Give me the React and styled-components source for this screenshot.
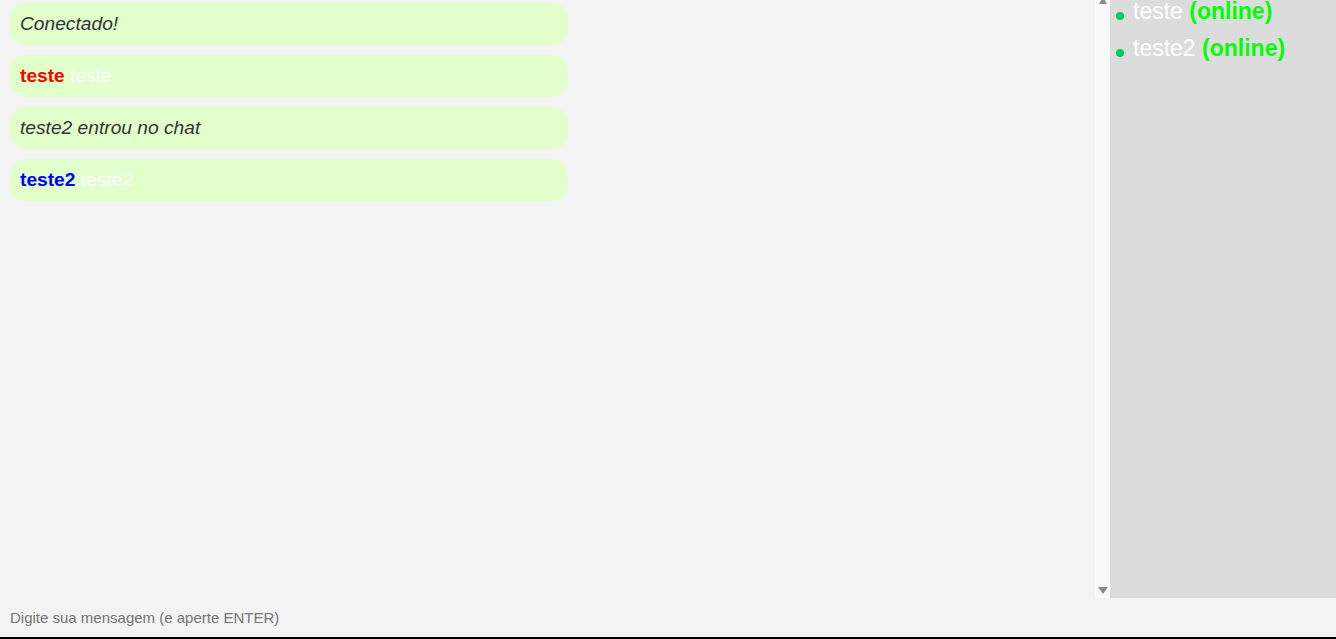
import { createGlobalStyle, styled } from "styled-components";

const GlobalStyle = createGlobalStyle`
  html, body {
    margin: 0;
    padding: 0;
    height: 100%;
    background: #f3f3f3;
    font-family: "Liberation Sans", Arial, sans-serif;
    overflow: hidden;
  }
`;

const messages = [
  { type: "system", text: "Conectado!" },
  { type: "chat", user: "teste", color: "#ff0000", text: "teste" },
  { type: "system", text: "teste2 entrou no chat" },
  { type: "chat", user: "teste2", color: "#0000ff", text: "teste2" },
];

const users = ["teste", "teste2"];

const App = () => {
  return (
    <Page>
      <GlobalStyle />
      <Main>
        <ChatArea>
          {messages.map((m, i) =>
            m.type === "system" ? (
              <Bubble key={i}>
                <SystemText>{m.text}</SystemText>
              </Bubble>
            ) : (
              <Bubble key={i}>
                <UserName $color={m.color}>{m.user}</UserName>{" "}
                <MsgText>{m.text}</MsgText>
              </Bubble>
            )
          )}
        </ChatArea>
        <ScrollTrack>
          <ArrowUp />
          <ArrowDown />
        </ScrollTrack>
        <UsersPanel>
          <UserList>
            {users.map((u) => (
              <UserItem key={u}>
                <UserLabel>{u}</UserLabel> <Online>(online)</Online>
              </UserItem>
            ))}
          </UserList>
        </UsersPanel>
      </Main>
      <MessageInput type="text" placeholder="Digite sua mensagem (e aperte ENTER)" />
    </Page>
  );
};

export default App;

const Page = styled.div`
  display: flex;
  flex-direction: column;
  height: 639px;
  width: 1336px;
`;

const Main = styled.div`
  display: flex;
  height: 598px;
`;

const ChatArea = styled.div`
  flex: 1;
  display: flex;
  flex-direction: column;
  align-items: flex-start;
  gap: 10px;
  padding: 3px 10px 0 10px;
`;

const Bubble = styled.div`
  box-sizing: border-box;
  width: 558px;
  padding: 10px;
  background: #e1ffcb;
  border-radius: 15px;
  font-size: 19.2px;
  line-height: 22px;
`;

const SystemText = styled.span`
  font-style: italic;
  color: #333333;
`;

const UserName = styled.span`
  font-weight: bold;
  color: ${(p) => p.$color};
`;

const MsgText = styled.span`
  color: #ffffff;
`;

const ScrollTrack = styled.div`
  width: 15px;
  background: #fafafa;
  display: flex;
  flex-direction: column;
  justify-content: space-between;
  align-items: center;
  overflow: hidden;
  padding-bottom: 4px;
  box-sizing: border-box;
`;

const ArrowUp = styled.div`
  width: 0;
  height: 0;
  margin-top: -3px;
  border-left: 4.5px solid transparent;
  border-right: 4.5px solid transparent;
  border-bottom: 7px solid #8a8a8a;
`;

const ArrowDown = styled.div`
  width: 0;
  height: 0;
  border-left: 5px solid transparent;
  border-right: 5px solid transparent;
  border-top: 7px solid #8a8a8a;
`;

const UsersPanel = styled.div`
  width: 226px;
  background: #dcdcdc;
`;

const UserList = styled.ul`
  list-style: none;
  margin: 0;
  padding: 0 0 0 6px;
`;

const UserItem = styled.li`
  font-size: 23px;
  line-height: 22px;
  margin-bottom: 15px;
  white-space: nowrap;

  &::before {
    content: "";
    display: inline-block;
    width: 8px;
    height: 8px;
    border-radius: 50%;
    background: #00cc66;
    margin-right: 9px;
    vertical-align: -1px;
  }
`;

const UserLabel = styled.span`
  color: #ffffff;
`;

const Online = styled.span`
  color: #00ff00;
  font-weight: bold;
`;

const MessageInput = styled.input`
  box-sizing: border-box;
  height: 41px;
  width: 100%;
  margin: 0;
  padding: 0 10px;
  border: none;
  border-bottom: 2px solid #000000;
  background: #f3f3f3;
  font-family: "Liberation Sans", Arial, sans-serif;
  font-size: 15px;
  outline: none;

  &::placeholder {
    color: #757575;
  }
`;
